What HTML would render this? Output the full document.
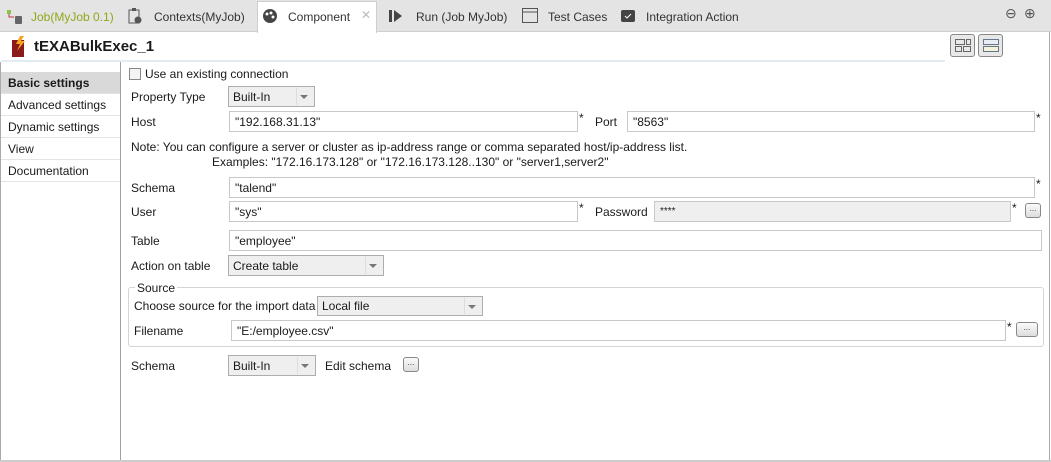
<!DOCTYPE html>
<html><head><meta charset="utf-8"><style>
*{box-sizing:border-box;margin:0;padding:0}
body{width:1051px;height:462px;background:#fff;font-family:"Liberation Sans",sans-serif;font-size:12px;color:#1a1a1a;position:relative;overflow:hidden}
.a{position:absolute;white-space:nowrap}
.in{position:absolute;border:1px solid #c8c8c8;background:#fff;height:21px;padding:3px 0 0 5px;font-size:12px}
.dd{position:absolute;border:1px solid #adadad;background:#efefef;height:21px;padding:3px 0 0 4px}
.dd:after{content:"";position:absolute;right:6px;top:8px;border-left:4px solid transparent;border-right:4px solid transparent;border-top:4px solid #777}
.dd i{position:absolute;right:17px;top:1px;bottom:1px;border-left:1px solid #ddd}
.bt{position:absolute;border:1px solid #888;border-radius:3px;background:linear-gradient(#fafafa,#ddd);width:16px;height:15px;font-size:8px;text-align:center;line-height:10px;color:#333}
.st{position:absolute;font-size:12px}
.sb{position:absolute;left:1px;width:119px;height:22px;border-bottom:1px solid #e4e4e4;padding:4px 0 0 7px}
</style></head><body>
<div class="a" style="left:0;top:0;width:1051px;height:32px;background:#e4e4e4;border-bottom:1px solid #cfcfcf"></div>
<div class="a" style="left:257px;top:1px;width:120px;height:32px;background:#fff;border:1px solid #cfcfcf;border-bottom:none"></div>
<svg class="a" style="left:7px;top:10px" width="16" height="15"><path d="M2 1v6h5" stroke="#c33" fill="none"/><rect x="0" y="0" width="4" height="4" fill="#8bc34a"/><rect x="8" y="6" width="7" height="8" rx="1" fill="#666"/></svg>
<div class="a" style="left:31px;top:10px;color:#8fa81c">Job(MyJob 0.1)</div>
<svg class="a" style="left:128px;top:8px" width="14" height="16"><rect x="1" y="2" width="10" height="13" fill="none" stroke="#555"/><rect x="4" y="0" width="4" height="3" fill="#555"/><circle cx="10" cy="12" r="3.5" fill="#555"/></svg>
<div class="a" style="left:154px;top:10px;color:#333">Contexts(MyJob)</div>
<svg class="a" style="left:262px;top:9px" width="16" height="14"><circle cx="8" cy="7" r="7" fill="#444"/><circle cx="5" cy="5" r="1.5" fill="#fff"/><circle cx="9" cy="4" r="1.5" fill="#fff"/><circle cx="11" cy="8" r="1.5" fill="#fff"/></svg>
<div class="a" style="left:288px;top:10px;color:#333">Component</div>
<div class="a" style="left:361px;top:8px;color:#bbb;font-size:12px">✕</div>
<svg class="a" style="left:389px;top:10px" width="14" height="12"><rect x="0" y="0" width="3" height="12" fill="#444"/><path d="M5 0l8 6-8 6z" fill="#444"/></svg>
<div class="a" style="left:416px;top:10px;color:#333">Run (Job MyJob)</div>
<svg class="a" style="left:522px;top:8px" width="16" height="15"><rect x="0.5" y="0.5" width="15" height="14" fill="none" stroke="#555"/><line x1="0" y1="4" x2="16" y2="4" stroke="#555"/></svg>
<div class="a" style="left:548px;top:10px;color:#333">Test Cases</div>
<svg class="a" style="left:621px;top:10px" width="14" height="12"><rect width="14" height="12" rx="2" fill="#444"/><path d="M4 6l2 2 4-4" stroke="#fff" fill="none"/></svg>
<div class="a" style="left:646px;top:10px;color:#333">Integration Action</div>
<div class="a" style="left:1005px;top:5px;color:#555;font-size:14px">⊖</div>
<div class="a" style="left:1024px;top:5px;color:#555;font-size:14px">⊕</div>
<div class="a" style="left:1px;top:60px;width:944px;height:2px;background:#e3ebf3"></div>
<svg class="a" style="left:11px;top:36px" width="17" height="21"><rect x="1" y="4" width="12" height="17" fill="#8b1a1a"/><path d="M9 0l-4 8h4l-3 7 8-10h-4l3-5z" fill="#f5a623"/></svg>
<div class="a" style="left:34px;top:38px;font-weight:bold;font-size:15px">tEXABulkExec_1</div>
<div class="a" style="left:950px;top:34px;width:25px;height:23px;border:1px solid #888;border-radius:3px;background:#e8e8e8"></div>
<svg class="a" style="left:955px;top:39px" width="16" height="14"><rect x="0.5" y="0.5" width="9" height="5" fill="none" stroke="#666"/><rect x="11.5" y="0.5" width="4" height="5" fill="none" stroke="#666"/><rect x="0.5" y="7.5" width="6" height="5" fill="none" stroke="#666"/><rect x="8.5" y="7.5" width="7" height="5" fill="none" stroke="#666"/></svg>
<div class="a" style="left:978px;top:34px;width:25px;height:23px;border:1px solid #888;border-radius:3px;background:#e8e8e8"></div>
<svg class="a" style="left:983px;top:39px" width="16" height="14"><rect x="0.5" y="0.5" width="15" height="5" fill="#e8eef4" stroke="#678"/><rect x="0.5" y="7.5" width="15" height="5" fill="#f3f0dc" stroke="#678"/></svg>
<div class="a" style="left:0;top:62px;width:1px;height:399px;background:#aaa"></div>
<div class="a" style="left:1049px;top:32px;width:1px;height:429px;background:#aaa"></div>
<div class="a" style="left:0;top:460px;width:1051px;height:2px;background:#ccc"></div>
<div class="a" style="left:120px;top:62px;width:1px;height:398px;background:#a0a0a0"></div>
<div class="sb" style="top:72px;background:#d9d9d9;font-weight:bold">Basic settings</div>
<div class="sb" style="top:94px">Advanced settings</div>
<div class="sb" style="top:116px">Dynamic settings</div>
<div class="sb" style="top:138px">View</div>
<div class="sb" style="top:160px">Documentation</div>
<div class="a" style="left:129px;top:68px;width:12px;height:12px;border:1px solid #888;background:#f4f4f4"></div>
<div class="a" style="left:145px;top:67px">Use an existing connection</div>
<div class="a" style="left:131px;top:90px">Property Type</div>
<div class="dd" style="left:228px;top:86px;width:87px">Built-In<i></i></div>
<div class="a" style="left:131px;top:115px">Host</div>
<div class="in" style="left:229px;top:111px;width:349px">"192.168.31.13"</div>
<div class="st" style="left:579px;top:111px">*</div>
<div class="a" style="left:595px;top:115px">Port</div>
<div class="in" style="left:627px;top:111px;width:408px">"8563"</div>
<div class="st" style="left:1036px;top:111px">*</div>
<div class="a" style="left:131px;top:140px">Note: You can configure a server or cluster as ip-address range or comma separated host/ip-address list.</div>
<div class="a" style="left:212px;top:155px">Examples: "172.16.173.128" or "172.16.173.128..130" or "server1,server2"</div>
<div class="a" style="left:131px;top:181px">Schema</div>
<div class="in" style="left:229px;top:177px;width:806px">"talend"</div>
<div class="st" style="left:1036px;top:177px">*</div>
<div class="a" style="left:131px;top:205px">User</div>
<div class="in" style="left:229px;top:201px;width:349px">"sys"</div>
<div class="st" style="left:579px;top:201px">*</div>
<div class="a" style="left:595px;top:205px">Password</div>
<div class="in" style="left:654px;top:201px;width:357px;background:#efefef;font-size:10px;padding-top:4px">****</div>
<div class="st" style="left:1012px;top:201px">*</div>
<div class="bt" style="left:1025px;top:203px">...</div>
<div class="a" style="left:131px;top:234px">Table</div>
<div class="in" style="left:229px;top:230px;width:813px">"employee"</div>
<div class="a" style="left:131px;top:259px">Action on table</div>
<div class="dd" style="left:228px;top:255px;width:156px">Create table<i></i></div>
<div class="a" style="left:128px;top:287px;width:916px;height:60px;border:1px solid #d5d5d5;border-radius:3px"></div>
<div class="a" style="left:135px;top:281px;background:#fff;padding:0 2px">Source</div>
<div class="a" style="left:134px;top:299px">Choose source for the import data</div>
<div class="dd" style="left:317px;top:296px;width:166px;height:20px;padding-top:2px">Local file<i></i></div>
<div class="a" style="left:134px;top:324px">Filename</div>
<div class="in" style="left:231px;top:320px;width:775px">"E:/employee.csv"</div>
<div class="st" style="left:1007px;top:320px">*</div>
<div class="bt" style="left:1016px;top:322px;width:22px">...</div>
<div class="a" style="left:131px;top:359px">Schema</div>
<div class="dd" style="left:228px;top:355px;width:88px">Built-In<i></i></div>
<div class="a" style="left:325px;top:359px">Edit schema</div>
<div class="bt" style="left:403px;top:357px">...</div>
</body></html>
